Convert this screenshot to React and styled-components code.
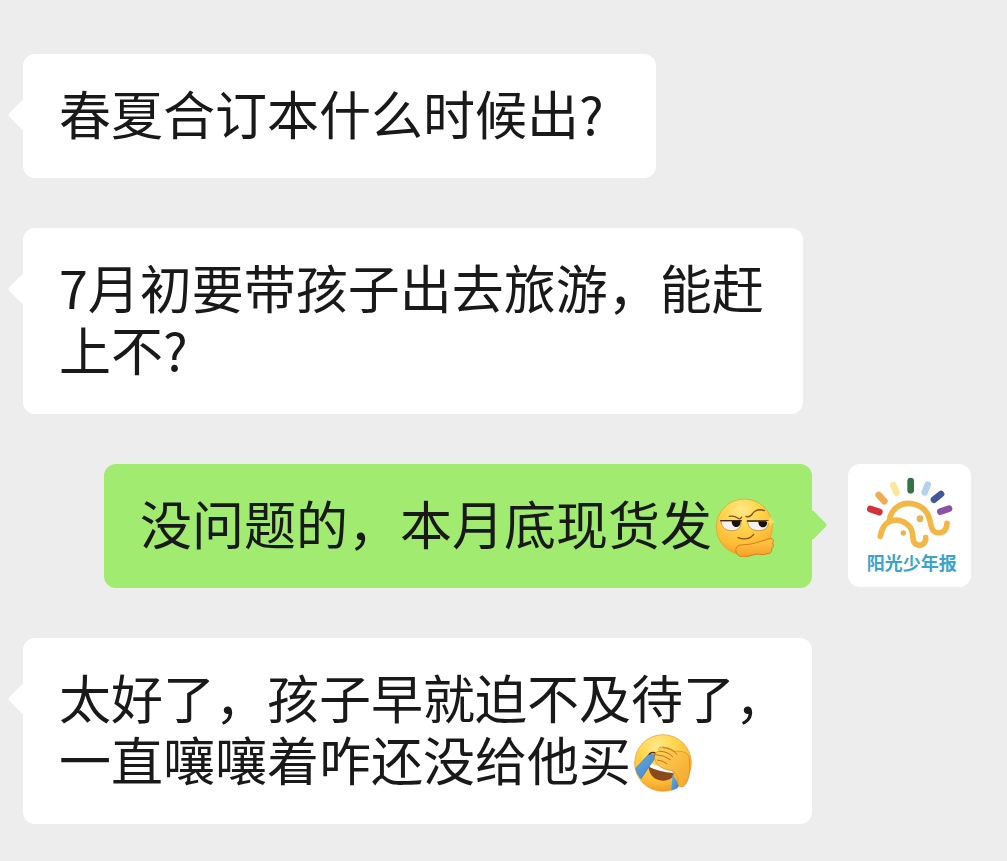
import React from "react";
import styled, { createGlobalStyle } from "styled-components";

const GlobalStyle = createGlobalStyle`
  * { box-sizing: border-box; }
  body {
    margin: 0;
    background: #ededed;
    color: #191919;
    font-family: "Noto Sans CJK SC", sans-serif;
  }
`;

const Chat = styled.main`
  display: flex;
  flex-direction: column;
  gap: 50px;
  padding: 54px 36px 36px 23px;
`;

const Message = styled.div`
  display: flex;
  align-items: flex-start;
  justify-content: ${(p) => (p.$mine ? "flex-end" : "flex-start")};
  gap: 36px;
`;

const Bubble = styled.div`
  position: relative;
  width: ${(p) => p.$width};
  max-width: 789px;
  padding: 28px 24px 34px 36px;
  border-radius: 12px;
  background: ${(p) => (p.$mine ? "#a0eb70" : "#ffffff")};

  &::before {
    content: "";
    position: absolute;
    top: 50px;
    ${(p) => (p.$mine ? "right" : "left")}: -11px;
    width: 22px;
    height: 22px;
    border-radius: 3px;
    background: inherit;
    transform: rotate(45deg);
  }
`;

const Text = styled.p`
  position: relative;
  margin: 0;
  font-size: 52px;
  line-height: 62px;
`;

const EmojiSvg = styled.svg`
  width: 60px;
  height: 60px;
  margin: -8px 2px;
  vertical-align: -4px;
`;

const Avatar = styled.svg`
  flex: none;
  width: 123px;
  height: 123px;
  border-radius: 12px;
  background: #ffffff;
`;

const AvatarName = styled.text`
  font-size: 54px;
  font-weight: 700;
  fill: #3ba3d0;
`;

function SmirkEmoji() {
  return (
    <EmojiSvg viewBox="41 35 180 180" role="img" aria-label="机智">
      <defs>
        <radialGradient id="smirkFace" cx="0.45" cy="0.2" r="0.85">
          <stop offset="0" stopColor="#ffe98a" />
          <stop offset="0.35" stopColor="#ffd650" />
          <stop offset="0.75" stopColor="#fdbb36" />
          <stop offset="1" stopColor="#ee9622" />
        </radialGradient>
        <linearGradient id="smirkHand" x1="0" y1="0" x2="0" y2="1">
          <stop offset="0" stopColor="#ffc84a" />
          <stop offset="1" stopColor="#f5a026" />
        </linearGradient>
      </defs>
      <circle cx="132" cy="125" r="84" fill="url(#smirkFace)" stroke="#e69a2b" strokeWidth="2" />
      <path d="M62 107 L122 107 C124 126 114 136 95 136 C75 136 63 126 62 107Z" fill="#f3f2f0" stroke="#b67820" strokeWidth="2" />
      <path d="M142 108 L204 108 C205 126 194 136 176 136 C156 136 143 127 142 108Z" fill="#f3f2f0" stroke="#b67820" strokeWidth="2" />
      <path d="M94 107 L121 107 C121 119 116 125 108 125 C99 125 94 118 94 107Z" fill="#17120f" />
      <path d="M174 108 L201 108 C201 120 196 126 188 126 C179 126 174 119 174 108Z" fill="#17120f" />
      <path d="M61 106 L123 106 M141 107 L204 107" stroke="#42270d" strokeWidth="4" strokeLinecap="round" />
      <path d="M87 93 Q103 91 112 98 Q119 104 124 95" fill="none" stroke="#8b5010" strokeWidth="4" strokeLinecap="round" />
      <path d="M137 93 Q149 98 157 84 Q171 68 192 76" fill="none" stroke="#8b5010" strokeWidth="4" strokeLinecap="round" />
      <path d="M113 157 Q143 168 160 147" fill="none" stroke="#8b4a10" strokeWidth="4" strokeLinecap="round" />
      <path d="M107 198 C104 182 116 178 134 178 C165 176 185 166 208 160 C219 157 223 168 215 174 C222 178 220 188 213 189 C217 198 210 206 200 205 C190 210 178 207 170 206 C154 209 143 214 132 215 C118 216 109 209 107 198Z" fill="url(#smirkHand)" stroke="#d97b1c" strokeWidth="3" />
      <path d="M211 92 L215 105 L226 109 L215 113 L211 124 L207 113 L196 109 L207 105Z" fill="#ffdc58" />
    </EmojiSvg>
  );
}

function FacepalmEmoji() {
  return (
    <EmojiSvg viewBox="25 25 180 180" role="img" aria-label="捂脸">
      <defs>
        <radialGradient id="palmFace" cx="0.4" cy="0.2" r="0.85">
          <stop offset="0" stopColor="#ffe98a" />
          <stop offset="0.35" stopColor="#ffd650" />
          <stop offset="0.75" stopColor="#fdbb36" />
          <stop offset="1" stopColor="#ee9622" />
        </radialGradient>
        <linearGradient id="palmHand" x1="0" y1="0" x2="1" y2="1">
          <stop offset="0" stopColor="#ffd45a" />
          <stop offset="1" stopColor="#f6a52c" />
        </linearGradient>
        <linearGradient id="palmTear" x1="0" y1="0" x2="1" y2="1">
          <stop offset="0" stopColor="#68b0ea" />
          <stop offset="1" stopColor="#3a7dc4" />
        </linearGradient>
      </defs>
      <circle cx="115" cy="115" r="85" fill="url(#palmFace)" stroke="#e69a2b" strokeWidth="2" />
      <path d="M72 125 C72 152 92 168 113 168 C130 168 144 161 147 150 L142 134Z" fill="#8a4a1c" />
      <path d="M76 117 L141 134 L145 145 Q105 142 74 127Z" fill="#ffffff" />
      <path d="M144 148 L162 181 L158 191 L140 198Z" fill="url(#palmTear)" />
      <path d="M72 89 L93 91 Q94 100 87 106 L49 162 Q36 147 33 131Z" fill="url(#palmTear)" stroke="#4a7da4" strokeWidth="2" />
      <path d="M72 90 Q82 79 94 87 L90 94" fill="none" stroke="#5a310c" strokeWidth="4" />
      <path d="M91 92 C91 83 98 79 107 80 C97 73 102 66 113 67 C130 67 142 74 150 80 C168 78 184 82 190 91 C197 101 193 115 195 130 C196 150 188 178 176 185 C164 189 157 180 160 169 C160 154 150 143 143 138 C124 136 110 130 101 121 C91 112 88 101 91 92Z" fill="url(#palmHand)" stroke="#d58321" strokeWidth="2" />
      <path d="M107 80 Q129 80 144 96 M94 90 Q118 91 137 105 M115 69 Q140 70 157 89 M98 106 Q113 107 127 117" fill="none" stroke="#b57a25" strokeWidth="3" strokeLinecap="round" />
    </EmojiSvg>
  );
}

function NewspaperAvatar() {
  return (
    <Avatar viewBox="24 30 369 369" role="img" aria-label="阳光少年报">
      <g fill="none" strokeWidth="20" strokeLinecap="round">
        <path d="M91 165 L118 174" stroke="#d6303a" />
        <path d="M116 123 L133 142" stroke="#efac50" />
        <path d="M160 94 L170 116" stroke="#f7e89b" />
        <path d="M212 81 L212 109" stroke="#347345" />
        <path d="M263 92 L254 115" stroke="#b5d2ec" />
        <path d="M303 120 L282 137" stroke="#40569f" />
        <path d="M327 164 L301 173" stroke="#8d52a5" />
      </g>
      <g fill="none" stroke="#f3b748" strokeWidth="17" strokeLinecap="round" strokeLinejoin="round">
        <path d="M121 247 Q128 211 148 203 Q181 190 207 216 C226 235 211 258 227 270 C245 281 259 266 257 251" />
        <path d="M148 199 C153 168 177 148 205 148 C239 149 264 169 270 201 C276 233 283 238 301 236 Q320 232 321 208" />
      </g>
      <circle cx="240" cy="194" r="10" fill="#e9b34d" />
      <circle cx="190" cy="237" r="8" fill="#e9b34d" />
      <AvatarName x="80" y="347">阳光少年报</AvatarName>
    </Avatar>
  );
}

export default function App() {
  return (
    <>
      <GlobalStyle />
      <Chat lang="zh-CN">
        <Message>
          <Bubble $width="633px">
            <Text>春夏合订本什么时候出?</Text>
          </Bubble>
        </Message>
        <Message>
          <Bubble $width="780px">
            <Text>7月初要带孩子出去旅游，能赶上不?</Text>
          </Bubble>
        </Message>
        <Message $mine>
          <Bubble $mine $width="708px">
            <Text>
              没问题的，本月底现货发
              <SmirkEmoji />
            </Text>
          </Bubble>
          <NewspaperAvatar />
        </Message>
        <Message>
          <Bubble $width="789px">
            <Text>
              太好了，孩子早就迫不及待了，一直嚷嚷着咋还没给他买
              <FacepalmEmoji />
            </Text>
          </Bubble>
        </Message>
      </Chat>
    </>
  );
}
